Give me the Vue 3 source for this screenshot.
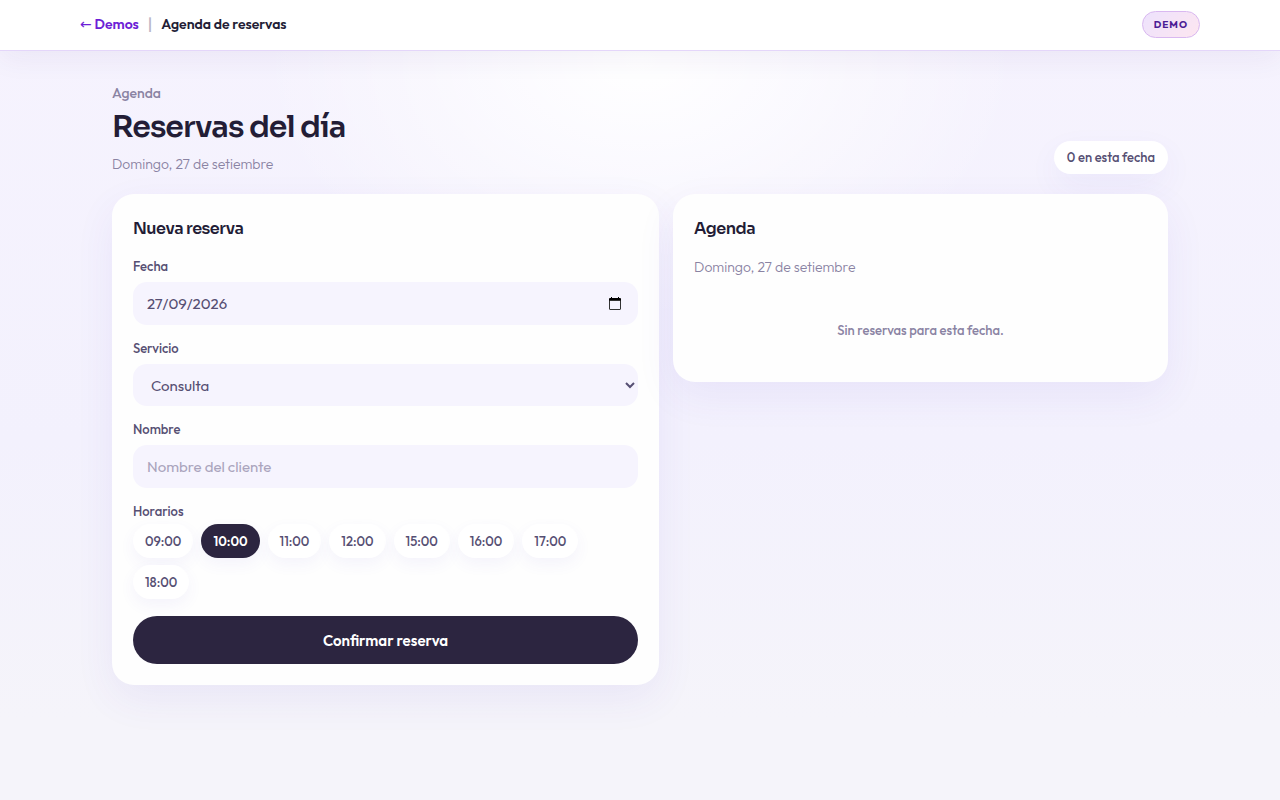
<script setup>
import { ref, computed } from 'vue'

const fecha = ref('27/09/2026')
const servicio = ref('Consulta')
const nombre = ref('')
const horario = ref('10:00')
const reservas = ref([])

const servicios = ['Consulta', 'Control', 'Tratamiento']
const horarios = ['09:00', '10:00', '11:00', '12:00', '15:00', '16:00', '17:00', '18:00']

const dias = ['Domingo', 'Lunes', 'Martes', 'Miércoles', 'Jueves', 'Viernes', 'Sábado']
const meses = [
  'enero', 'febrero', 'marzo', 'abril', 'mayo', 'junio',
  'julio', 'agosto', 'setiembre', 'octubre', 'noviembre', 'diciembre',
]

// Fecha en texto, por ejemplo "Domingo, 27 de setiembre"
const fechaLarga = computed(() => {
  const [dia, mes, anio] = fecha.value.split('/').map(Number)
  const d = new Date(anio, mes - 1, dia)
  if (isNaN(d)) return fecha.value
  return `${dias[d.getDay()]}, ${d.getDate()} de ${meses[d.getMonth()]}`
})

const delDia = computed(() => reservas.value.filter((r) => r.fecha === fecha.value))

const confirmar = () => {
  if (!nombre.value.trim()) return
  reservas.value.push({
    fecha: fecha.value,
    servicio: servicio.value,
    nombre: nombre.value.trim(),
    horario: horario.value,
  })
  nombre.value = ''
}
</script>

<template>
  <div class="page">
    <header class="topbar">
      <div class="topbar-inner">
        <nav class="crumbs">
          <a href="#" class="back"><span class="arrow">←</span> Demos</a>
          <span class="divider">|</span>
          <span class="current">Agenda de reservas</span>
        </nav>
        <span class="badge">DEMO</span>
      </div>
    </header>

    <main class="content">
      <div class="heading">
        <div>
          <p class="eyebrow">Agenda</p>
          <h1>Reservas del día</h1>
          <p class="muted">{{ fechaLarga }}</p>
        </div>
        <span class="count">{{ delDia.length }} en esta fecha</span>
      </div>

      <div class="columns">
        <form class="card" @submit.prevent="confirmar">
          <h2>Nueva reserva</h2>

          <div class="field">
            <label for="fecha">Fecha</label>
            <div class="control date">
              <input id="fecha" v-model="fecha" type="text" inputmode="numeric" />
              <button type="button" class="picker" aria-label="Elegir fecha">
                <svg width="12" height="13" viewBox="0 0 12 13">
                  <path d="M2 0h1v1h6V0h1v1h1a1 1 0 0 1 1 1v2H0V2a1 1 0 0 1 1-1h1z" />
                  <rect x="0.500" y="3.500" width="11" height="9" rx="0.500" fill="none" stroke="#333" />
                </svg>
              </button>
            </div>
          </div>

          <div class="field">
            <label for="servicio">Servicio</label>
            <select id="servicio" v-model="servicio" class="control">
              <option v-for="s in servicios" :key="s">{{ s }}</option>
            </select>
          </div>

          <div class="field">
            <label for="nombre">Nombre</label>
            <input id="nombre" v-model="nombre" class="control" type="text" placeholder="Nombre del cliente" />
          </div>

          <div role="group" aria-labelledby="horarios">
            <span id="horarios" class="group-label">Horarios</span>
            <div class="slots">
              <button
                v-for="h in horarios"
                :key="h"
                type="button"
                class="slot"
                :class="{ active: h === horario }"
                @click="horario = h"
              >
                {{ h }}
              </button>
            </div>
          </div>

          <button type="submit" class="submit">Confirmar reserva</button>
        </form>

        <section class="card">
          <h2>Agenda</h2>
          <p class="muted">{{ fechaLarga }}</p>
          <ul v-if="delDia.length" class="list">
            <li v-for="r in delDia" :key="r.horario + r.nombre">
              {{ r.horario }} · {{ r.nombre }} · {{ r.servicio }}
            </li>
          </ul>
          <p v-else class="empty">Sin reservas para esta fecha.</p>
        </section>
      </div>
    </main>
  </div>
</template>

<style>
body {
  margin: 0;
  background: #f5f4fa;
}
</style>

<style scoped>
.page {
  min-height: 100vh;
  font-family: Outfit, Lato, sans-serif;
  font-size: 14px;
  color: #231d36;
  background:
    radial-gradient(ellipse 380px 260px at 50% 60px, #ffffff 0%, rgba(255, 255, 255, 0) 100%),
    linear-gradient(180deg, #f6f3fe 0%, #f3f1fd 55%, #f5f4fa 90%);
}

.topbar {
  position: relative;
  background: #fff;
  border-bottom: 1px solid #e4d6fa;
  box-shadow: 0 8px 28px rgba(60, 30, 120, 0.06);
}

.topbar-inner {
  display: flex;
  align-items: center;
  justify-content: space-between;
  max-width: 1120px;
  height: 50px;
  margin: 0 auto;
}

.crumbs {
  display: flex;
  align-items: center;
  gap: 9px;
  padding-bottom: 2px;
  line-height: 20px;
  font-weight: 600;
}

.back {
  color: #6d1fd6;
  text-decoration: none;
}

.arrow {
  font-family: 'DejaVu Sans', sans-serif;
  font-weight: 400;
}

.divider {
  color: #b9b5c6;
  font-size: 16px;
  font-weight: 500;
}

.badge {
  margin-bottom: 2px;
  padding: 5px 11px;
  border: 1px solid #d9b8f0;
  border-radius: 999px;
  background: linear-gradient(135deg, #ede2fd, #fde6f0);
  color: #4c1d95;
  font-size: 10px;
  line-height: 15px;
  font-weight: 700;
  letter-spacing: 1px;
}

.content {
  max-width: 1056px;
  margin: 0 auto;
  padding: 32px 32px 64px;
}

.heading {
  display: flex;
  align-items: flex-end;
  justify-content: space-between;
  margin-bottom: 20px;
}

.heading p,
.card p {
  margin: 0;
}

.eyebrow {
  color: #8a83a3;
  line-height: 20px;
  font-weight: 500;
}

h1 {
  margin: 6px 0 9px;
  font-family: Sora, Inter, sans-serif;
  font-size: 30px;
  line-height: 36px;
  font-weight: 600;
  letter-spacing: -1px;
}

.muted {
  color: #8a83a3;
  line-height: 20px;
  font-weight: 300;
}

.count {
  padding: 7px 13px;
  border-radius: 999px;
  background: #fff;
  box-shadow: 0 12px 32px rgba(90, 60, 200, 0.06);
  color: #564f73;
  font-size: 13px;
  line-height: 19px;
  font-weight: 500;
}

.columns {
  display: grid;
  grid-template-columns: 1.05fr 0.95fr;
  align-items: start;
  gap: 14px;
}

.card {
  min-width: 0;
  padding: 21px;
  border-radius: 22px;
  background: #fefefe;
  box-shadow: 0 14px 40px rgba(90, 60, 200, 0.07);
}

h2 {
  margin: 0 0 15px;
  font-family: Sora, Inter, sans-serif;
  font-size: 16px;
  line-height: 27px;
  font-weight: 600;
  letter-spacing: -0.5px;
}

.field {
  display: flex;
  flex-direction: column;
  gap: 7px;
  margin-bottom: 14px;
}

label,
.group-label {
  color: #564f73;
  font-size: 13px;
  line-height: 18px;
  font-weight: 500;
}

.control {
  box-sizing: border-box;
  width: 100%;
  height: 43px;
  padding: 0 14px;
  border: 0;
  border-radius: 14px;
  background: #f6f4fe;
  color: #564f73;
  font-family: inherit;
  font-size: 15px;
  outline: none;
}

select.control {
  height: 42px;
  padding-right: 0;
}

.control::placeholder {
  color: #aaa4bd;
}

.date {
  display: flex;
  align-items: center;
  padding-right: 17px;
}

.date input {
  flex: 1;
  min-width: 0;
  padding: 0;
  border: 0;
  background: none;
  color: inherit;
  font: inherit;
  outline: none;
}

.picker {
  display: flex;
  padding: 0;
  border: 0;
  background: none;
  cursor: pointer;
}

.slots {
  display: flex;
  flex-wrap: wrap;
  gap: 7px 8px;
  margin-top: 4px;
}

.group-label {
  display: block;
}

.slot {
  height: 34px;
  padding: 0 12px;
  border: 0;
  border-radius: 999px;
  background: #fff;
  box-shadow: 0 6px 16px rgba(90, 60, 200, 0.06);
  color: #564f73;
  font-family: inherit;
  font-size: 13px;
  font-weight: 500;
  cursor: pointer;
}

.slot.active {
  background: #2c2540;
  color: #fff;
  font-weight: 600;
}

.submit {
  width: 100%;
  height: 48px;
  margin-top: 17px;
  border: 0;
  border-radius: 999px;
  background: #2c2540;
  color: #fff;
  font-family: inherit;
  font-size: 15px;
  font-weight: 600;
  cursor: pointer;
}

.card .empty {
  padding: 43px 0 21px;
  color: #8a83a3;
  font-size: 13px;
  line-height: 20px;
  font-weight: 500;
  text-align: center;
}

.list {
  margin: 14px 0 0;
  padding: 0;
  list-style: none;
  line-height: 28px;
}
</style>
